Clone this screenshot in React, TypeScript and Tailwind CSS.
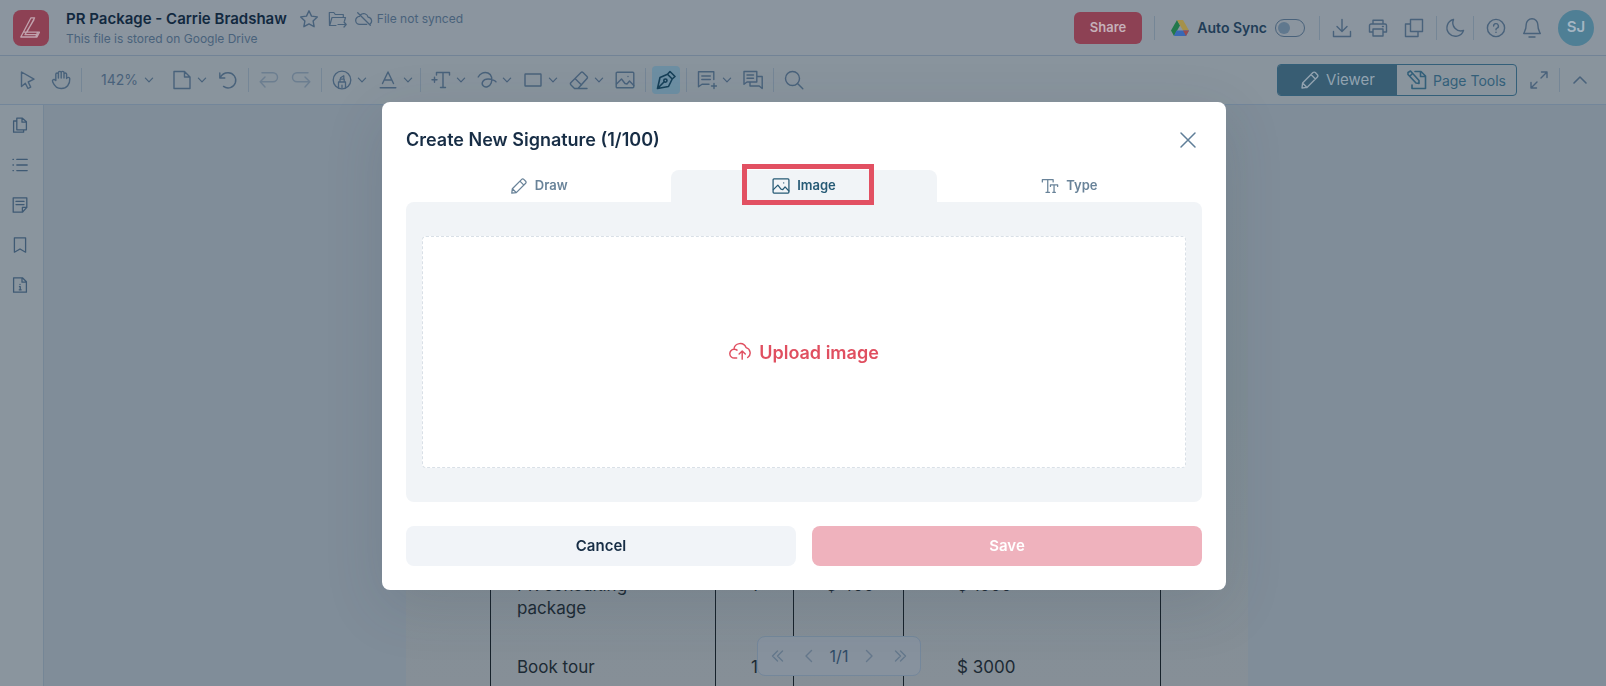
import { useState } from "react";
import type { ReactNode } from "react";
import clsx from "clsx";

const Icon = ({
  children,
  className = "size-5",
  width = 1.4,
}: {
  children: ReactNode;
  className?: string;
  width?: number;
}) => (
  <svg
    viewBox="0 0 20 20"
    fill="none"
    stroke="currentColor"
    strokeWidth={width}
    strokeLinecap="round"
    strokeLinejoin="round"
    className={clsx("shrink-0", className)}
    aria-hidden="true"
  >
    {children}
  </svg>
);

const Chevron = () => (
  <Icon className="size-3" width={2}>
    <path d="M4 7l6 6 6-6" />
  </Icon>
);

const PencilIcon = ({ className }: { className?: string }) => (
  <Icon className={className}>
    <path d="M2 18l.6-5L13 2.600a1.600 1.600 0 0 1 2.300 0l2.100 2.100a1.600 1.600 0 0 1 0 2.300L7 17.400 2 18zM11 4.600L15.400 9M2.600 13L7 17.400" />
  </Icon>
);

const ImageIcon = ({ className }: { className?: string }) => (
  <Icon className={className}>
    <rect x="1.2" y="2.2" width="17.6" height="15.6" rx="1" />
    <path d="M1.500 14l2.500-2.500 2.500-2.500 3.500 4.500 2 .5 2.500-3 4.300 4.500M13 6.500v.1" />
  </Icon>
);

const Divider = ({ className }: { className?: string }) => (
  <span className={clsx("h-6 w-px shrink-0 bg-[#758696]", className)} />
);

const Tool = ({
  label,
  menu,
  className,
  children,
}: {
  label: string;
  menu?: boolean;
  className?: string;
  children: ReactNode;
}) => (
  <button
    type="button"
    aria-label={label}
    aria-haspopup={menu ? "menu" : undefined}
    className={clsx(
      "flex shrink-0 items-center justify-between",
      menu ? "w-9" : "w-5",
      className,
    )}
  >
    {children}
    {menu && <Chevron />}
  </button>
);

const Header = () => {
  const [autoSync, setAutoSync] = useState(false);

  return (
    <header className="flex h-14 shrink-0 items-center justify-between border-b border-[#728396] bg-[#8b959f] pr-3 pl-[13px]">
      <div className="flex items-center">
        <a
          href="#home"
          aria-label="Home"
          className="flex size-9 items-center justify-center rounded-lg bg-[#8d4154] text-[#c1a3ae]"
        >
          <Icon className="size-6" width={1.1}>
            <path d="M10 1.500h3L6.500 13.500H17l-2 4H1.500L10 1.500zM12.500 3L5 15.500h10.500M15.500 13.500l-1.500 4M4 13.500h2.500" />
          </Icon>
        </a>
        <div className="ml-[17px] pt-0.5">
          <div className="flex items-center">
            <h1 className="text-[15px] leading-5 font-semibold text-[#12293f]">
              PR Package - Carrie Bradshaw
            </h1>
            <div className="ml-3 flex items-center gap-2 text-[#49627b]">
              <button type="button" aria-label="Add to favourites">
                <Icon>
                  <path d="M10 1.800l2.500 5.300 5.800.8-4.200 4 1 5.800-5.100-2.800-5.100 2.800 1-5.800-4.200-4 5.800-.8L10 1.800z" />
                </Icon>
              </button>
              <button type="button" aria-label="Move file">
                <Icon width={1.2}>
                  <path d="M9 16.500H2.500L2.300 3.500h4.500l1.500 2h8V8M2.700 16.500L5 8.500h13.500l-1 3.500M11 15.500h8M17 13l2.200 2.500L17 18" />
                </Icon>
              </button>
              <span className="flex items-center gap-1 text-xs">
                <Icon className="size-[18px]">
                  <path d="M3 3l14 14M6 5.500A5 5 0 0 1 14.500 8a4.200 4.200 0 0 1 2.300 7.500M5 7.200A4.300 4.300 0 0 0 5.300 16H13" />
                </Icon>
                File not synced
              </span>
            </div>
          </div>
          <p className="text-xs leading-5 text-[#49627b]">
            This file is stored on Google Drive
          </p>
        </div>
      </div>

      <div className="flex items-center text-[#49627b]">
        <button
          type="button"
          className="h-8 rounded-md bg-[#8d4154] px-4 text-[13px] font-semibold text-[#c5b0b9]"
        >
          Share
        </button>
        <Divider className="mx-3" />
        <label className="ml-1 flex cursor-pointer items-center text-[14px] font-semibold text-[#213d57]">
          <svg viewBox="0 0 18 16" className="mr-2 h-4 w-[18px]" aria-hidden="true">
            <path d="M6 0L0 10.500 3 16l6-10.500z" fill="#23784a" />
            <path d="M6 0h6l6 10.500h-6z" fill="#a5914a" />
            <path d="M5.500 10.500H18L15 16H3z" fill="#3868b5" />
            <path d="M12 10.500h6L15 16z" fill="#994b4d" />
          </svg>
          Auto Sync
          <input
            type="checkbox"
            className="peer sr-only"
            checked={autoSync}
            onChange={(e) => setAutoSync(e.target.checked)}
          />
          <span className="ml-2 flex h-[18px] w-[30px] items-center rounded-full border border-[#49627b] px-0.5 peer-checked:justify-end">
            <span className="size-3 rounded-full bg-[#60788e]" />
          </span>
        </label>
        <Divider className="mr-3 ml-3.5" />
        <div className="flex items-center gap-4">
          <button type="button" aria-label="Download">
            <Icon>
              <path d="M10 1.500v11.500M5 8.500l5 5 5-5M1.500 13.500v5h17v-5" />
            </Icon>
          </button>
          <button type="button" aria-label="Print">
            <Icon>
              <path d="M5 6V2.200h10V6M5 14H1.500V7.500a1.500 1.500 0 0 1 1.500-1.500h14a1.500 1.500 0 0 1 1.500 1.500V14H15M5 11h10v7H5zM14.500 8.500h.8" />
            </Icon>
          </button>
          <button type="button" aria-label="Duplicate">
            <Icon>
              <path d="M6.500 1.500h12v12h-12zM6.500 6h-5v12.500h12.500v-5" />
            </Icon>
          </button>
        </div>
        <Divider className="mr-2 ml-3" />
        <button type="button" aria-label="Dark mode">
          <Icon>
            <path d="M8.500 1.500A8.500 8.500 0 1 0 18.500 12.500 8.200 8.200 0 0 1 8.500 1.500z" />
          </Icon>
        </button>
        <Divider className="mr-3 ml-2" />
        <div className="flex items-center gap-4">
          <button type="button" aria-label="Help">
            <Icon>
              <circle cx="10" cy="10" r="8.600" />
              <path d="M7.600 8a2.400 2.400 0 1 1 3.400 2.200c-.7.300-1 .7-1 1.600M10 14.200v.2" />
            </Icon>
          </button>
          <button type="button" aria-label="Notifications">
            <Icon>
              <path d="M10 .8A5.800 5.800 0 0 0 4.200 6.600c0 5-1.200 6.400-2.500 8.900h16.600c-1.300-2.500-2.500-3.900-2.500-8.900A5.800 5.800 0 0 0 10 .8zM7 19h6" />
            </Icon>
          </button>
          <button
            type="button"
            className="size-9 rounded-full bg-[#4f7f95] text-[15px] font-semibold text-[#a4b5c2]"
          >
            SJ
          </button>
        </div>
      </div>
    </header>
  );
};

const Toolbar = () => (
  <div className="flex h-[49px] shrink-0 items-center justify-between border-b border-[#73869a] bg-[#89949d] pr-4 pl-[18px] text-[#49627b]">
    <div className="flex items-center gap-2.5">
      <Tool label="Select">
        <Icon>
          <path d="M3.500 2v14.500l3.800-3.300 2.700 5.300 2.700-1.400L10.200 12l5.800-2.800L3.500 2z" />
        </Icon>
      </Tool>
      <Tool label="Pan" className="ml-[3px]">
        <Icon>
          <path d="M4.800 10.500V4.300a1.300 1.300 0 0 1 2.600 0V8M7.400 8V2.800a1.400 1.400 0 0 1 2.800 0V8M10.200 8V2.800a1.400 1.400 0 0 1 2.800 0V8M13 8V4.300a1.300 1.300 0 0 1 2.600 0v4.200c.6-1.700 3-1.500 3.200.3.200 5.500-3 9.700-8.500 9.700-4.500 0-7-2.800-8.600-6.600-.9-2.100 1.300-3.500 3.100-1.400" />
        </Icon>
      </Tool>
      <Divider />
      <div className="relative ml-[9px] flex items-center">
        <select
          aria-label="Zoom"
          className="w-[54px] appearance-none bg-transparent text-[14px] leading-6"
          defaultValue="142"
        >
          <option value="100">100%</option>
          <option value="142">142%</option>
        </select>
        <span className="pointer-events-none absolute right-0">
          <Chevron />
        </span>
      </div>
      <Tool label="Page layout" menu className="ml-[7px]">
        <Icon>
          <path d="M2 1.500h10.500L18 7v11.500H2zM12.500 1.500V7H18" />
        </Icon>
      </Tool>
      <Tool label="Rotate">
        <Icon>
          <path d="M1.800 3v5h5M2.200 7.800C4 4 7 2.800 10 2.800a7.600 7.600 0 1 1-4.500 13.600" />
        </Icon>
      </Tool>
      <Divider />
      <div className="flex gap-3 text-[#6c7e90]">
        <Tool label="Undo">
          <Icon>
            <path d="M3 2.800h11a4.500 4.500 0 0 1 0 9H1.500M6 7l-4.800 4.800L6 17" />
          </Icon>
        </Tool>
        <Tool label="Redo">
          <Icon>
            <path d="M17 2.800H6a4.500 4.500 0 0 0 0 9h12.500M14 7l4.800 4.800L14 17" />
          </Icon>
        </Tool>
      </div>
      <Divider />
      <Tool label="Highlight" menu>
        <Icon width={1.3}>
          <circle cx="10" cy="10" r="8.800" />
          <path d="M6.500 17.800V12h7v5.800M8 12V9.200h4.200V12M8.600 9.200V7.800l3.200-2v3.400M10 17.500v-2.300" />
        </Icon>
      </Tool>
      <Tool label="Text colour" menu>
        <Icon>
          <path d="M4.500 13.500L10 2l5.500 11.500M6.200 10h7.600M2.200 17.800h15.600" />
        </Icon>
      </Tool>
      <Divider className="-ml-1" />
      <Tool label="Add text" menu>
        <Icon>
          <path d="M5.500 5V2.500h13V5M12 2.500v15M9.500 17.500h5M1 9.800h5M3.500 7.300v5" />
        </Icon>
      </Tool>
      <Tool label="Freehand" menu>
        <Icon>
          <path d="M1.200 7C3 3.500 7 1.500 11 3c4 1.600 4.500 6.500 3.200 10-1.500 4-6 5-8 2.800C4 13.500 5.500 9 11 9c4.500 0 7.500 2 8 2.800" />
        </Icon>
      </Tool>
      <Tool label="Shape" menu>
        <Icon>
          <rect x="2" y="4" width="16" height="12" rx=".5" />
        </Icon>
      </Tool>
      <Tool label="Eraser" menu>
        <Icon>
          <path d="M2 12.500L12 2.500a1.500 1.500 0 0 1 2 0l4 4a1.500 1.500 0 0 1 0 2L9 18.500H5.500L2 15a1.800 1.800 0 0 1 0-2.500zM6 8.500l6.500 6.500M9 18.500h9" />
        </Icon>
      </Tool>
      <Tool label="Insert image">
        <ImageIcon />
      </Tool>
      <Divider />
      <div className="-mx-1 rounded bg-[#6d8fa3] p-1 text-[#164058]">
        <Tool label="Signature">
          <Icon width={1.6}>
            <path d="M1.500 18.500L4 7.500l7.500-3.200 4.700 4.700-3.700 7.500-11 2zM1.500 18.500l6.700-6.700M11.500 4.300l2.500-2.800 5 5-2.800 2.500" />
            <circle cx="9.400" cy="10.600" r="1.600" />
          </Icon>
        </Tool>
      </div>
      <Divider />
      <Tool label="Add comment" menu>
        <Icon>
          <path d="M16.800 9.500V1.800H1.500v15l3.500-2.600h7M4.800 6h8.500M4.800 9.500h8.500M14.500 16h5M17 13.500v5" />
        </Icon>
      </Tool>
      <Tool label="Comments">
        <Icon>
          <path d="M1 1.500h12.800V12H4l-3 2.300zM4 5h6.500M4 8.200h6.500M14 6.500h5.200V18.500l-3-2.500H7v-4" />
        </Icon>
      </Tool>
      <Divider />
      <Tool label="Search">
        <Icon>
          <circle cx="8.500" cy="8.500" r="7" />
          <path d="M13.500 13.500l5.300 5.300" />
        </Icon>
      </Tool>
    </div>

    <div className="flex items-center">
      <div className="flex h-8 w-60 overflow-hidden rounded border border-[#335f79] text-[15px] text-[#335f79]">
        <button
          type="button"
          className="flex flex-1 items-center justify-center gap-1.5 bg-[#385d73] text-[#92a3b0]"
        >
          <PencilIcon />
          Viewer
        </button>
        <button
          type="button"
          className="flex flex-1 items-center justify-center gap-1.5 text-[14px] whitespace-nowrap"
        >
          <Icon width={1.6}>
            <path d="M8 1.500h6L18.500 6v12.500H5V15M13.500 1.500V6.500h5M1 2.500L3.500 1 12 10.500v3l-3-.5L1 4.500zM3 6l2.500-2.500" />
          </Icon>
          Page Tools
        </button>
      </div>
      <button type="button" aria-label="Full screen" className="ml-3">
        <Icon>
          <path d="M12.500 2h5.500v5.500M18 2l-6 6M7.500 18H2v-5.500M2 18l6-6" />
        </Icon>
      </button>
      <Divider className="mx-2.5" />
      <button type="button" aria-label="Collapse toolbar">
        <Icon width={1.6}>
          <path d="M4 13l6-6 6 6" />
        </Icon>
      </button>
    </div>
  </div>
);

const panels = [
  {
    label: "Pages",
    icon: <path d="M6 1.500h7L18 6v10H6zM12.500 1.500V6.500H18M6 5H2v14h12.500v-3" />,
  },
  {
    label: "Outline",
    icon: <path d="M6 3h13M6 10h13M6 17h13M1.200 3h.6M1.200 10h.6M1.200 17h.6" />,
  },
  {
    label: "Notes",
    icon: <path d="M1.500 1h17v12l-5.500 6H1.500zM13 19v-6h5.500M5 5.500h10M5 9.500h10" />,
  },
  { label: "Bookmarks", icon: <path d="M3 1h14v18l-7-4-7 4z" /> },
  {
    label: "File info",
    icon: <path d="M2 1h11l5 5v13H2zM12.500 1v5.500H18M10 9.200v.3M9.300 12h1v4M9 16h2.500" />,
  },
];

const Sidebar = () => (
  <nav className="flex w-11 shrink-0 flex-col items-center gap-6 border-r border-[#758696] bg-[#8a959e] pt-3 pr-[3px] text-[#3f5a74]">
    {panels.map((p) => (
      <button key={p.label} type="button" aria-label={p.label}>
        <Icon className="size-4" width={1.6}>
          {p.icon}
        </Icon>
      </button>
    ))}
  </nav>
);

const rows = [
  ["PR consulting package", "1", "$ 400", "$ 1000"],
  ["Book tour", "1", "", "$ 3000"],
];

const Document = () => (
  <main className="relative flex min-w-0 flex-1 justify-center overflow-hidden bg-[#808d99] pl-1">
    <div className="w-[842px] shrink-0 bg-linear-to-b from-[#808d98] via-[#7f8d95] to-[#868f97] pt-[451px] pl-[84px]">
      <table className="w-[671px] table-fixed border-collapse text-[17px] leading-[23px] text-[#1c2a34]">
        <colgroup>
          <col className="w-[225px]" />
          <col className="w-[78px]" />
          <col className="w-[110px]" />
          <col />
        </colgroup>
        <tbody>
          {rows.map(([item, qty, price, total]) => (
            <tr key={item} className="align-top">
              <td className="border-x border-[#17222b] py-[18px] pr-16 pl-[26px]">
                {item}
              </td>
              <td className="border-x border-[#17222b] py-[18px] text-center">{qty}</td>
              <td className="border-x border-[#17222b] py-[18px] pl-8">{price}</td>
              <td className="border-x border-[#17222b] py-[18px] pl-[53px]">{total}</td>
            </tr>
          ))}
        </tbody>
      </table>
    </div>

    <div className="absolute inset-x-0 bottom-2.5 flex justify-center pl-7">
      <div className="flex h-10 items-center gap-[11px] rounded-lg border border-[#74879b] bg-[#87929e] px-2.5 text-[#65788c]">
        <button type="button" aria-label="First page">
          <Icon>
            <path d="M9.500 5l-5 5 5 5M14.500 5l-5 5 5 5" />
          </Icon>
        </button>
        <button type="button" aria-label="Previous page">
          <Icon>
            <path d="M12.500 4.500L7 10l5.500 5.500" />
          </Icon>
        </button>
        <span className="text-base whitespace-nowrap text-[#304c67]">1/1</span>
        <button type="button" aria-label="Next page">
          <Icon>
            <path d="M7.500 4.500L13 10l-5.500 5.500" />
          </Icon>
        </button>
        <button type="button" aria-label="Last page">
          <Icon>
            <path d="M5.500 5l5 5-5 5M10.500 5l5 5-5 5" />
          </Icon>
        </button>
      </div>
    </div>
  </main>
);

const tabs = [
  { id: "Draw", icon: <PencilIcon className="size-[18px]" /> },
  { id: "Image", icon: <ImageIcon className="size-[18px]" /> },
  {
    id: "Type",
    icon: (
      <Icon className="size-[18px]">
        <path d="M1.500 5.500V3h12v2.500M7.500 3v14M5.500 17h4M10.500 10.500V8.800h8v1.700M14.500 8.800V17M13 17h3" />
      </Icon>
    ),
  },
];

const SignatureModal = () => {
  const [active, setActive] = useState("Image");

  return (
    <div className="fixed inset-0 z-10 flex items-center justify-center pt-1.5 pl-0.5">
      <div
        role="dialog"
        aria-labelledby="signature-title"
        className="w-full max-w-[844px] rounded-lg bg-white p-6 shadow-[0_16px_60px_rgba(40,60,75,0.14)]"
      >
        <div className="flex h-11 items-start justify-between">
          <h2
            id="signature-title"
            className="text-[18px] leading-7 font-semibold text-[#172d45]"
          >
            Create New Signature (1/100)
          </h2>
          <button type="button" aria-label="Close" className="mt-1 mr-1 text-[#5f7e98]">
            <Icon width={1.5}>
              <path d="M3 3l14 14M17 3L3 17" />
            </Icon>
          </button>
        </div>

        <div role="tablist" className="grid grid-cols-3">
          {tabs.map((tab) => (
            <button
              key={tab.id}
              type="button"
              role="tab"
              aria-selected={active === tab.id}
              onClick={() => setActive(tab.id)}
              className={clsx(
                "relative flex h-8 items-center justify-center gap-[7px] rounded-t-lg text-[13px] font-semibold",
                active === tab.id ? "bg-[#f1f4f7] text-[#265a75]" : "text-[#698399]",
              )}
            >
              {tab.icon}
              {tab.id}
              {tab.id === "Image" && (
                <span className="pointer-events-none absolute -top-1.5 left-[71px] h-[41px] w-[132px] border-[5px] border-[#e25062]" />
              )}
            </button>
          ))}
        </div>

        <div className="rounded-lg bg-[#f1f4f7] px-4 py-[34px]">
          <button
            type="button"
            className="flex h-[232px] w-full items-center justify-center gap-2 rounded border border-dashed border-[#d9e0e7] bg-white text-[18px] font-semibold text-[#e04f60]"
          >
            <Icon className="size-[22px]" width={1.3}>
              <path d="M7 15.500H5a4 4 0 0 1-.5-8 5.700 5.700 0 0 1 11-1.500 5 5 0 0 1 1.500 9M5 7.500a4 4 0 0 1 2.300.8M12 16.500V9M9.200 11.800L12 9l2.800 2.800" />
            </Icon>
            Upload image
          </button>
        </div>

        <div className="mt-6 grid grid-cols-2 gap-4 text-[15px] font-semibold">
          <button type="button" className="h-10 rounded-lg bg-[#f1f4f8] text-[#172d45]">
            Cancel
          </button>
          <button type="button" disabled className="h-10 rounded-lg bg-[#efb2bd] text-white">
            Save
          </button>
        </div>
      </div>
    </div>
  );
};

export default function App() {
  return (
    <div className="flex h-screen flex-col overflow-hidden font-['Inter',sans-serif]">
      <Header />
      <Toolbar />
      <div className="flex min-h-0 flex-1">
        <Sidebar />
        <Document />
      </div>
      <SignatureModal />
    </div>
  );
}
